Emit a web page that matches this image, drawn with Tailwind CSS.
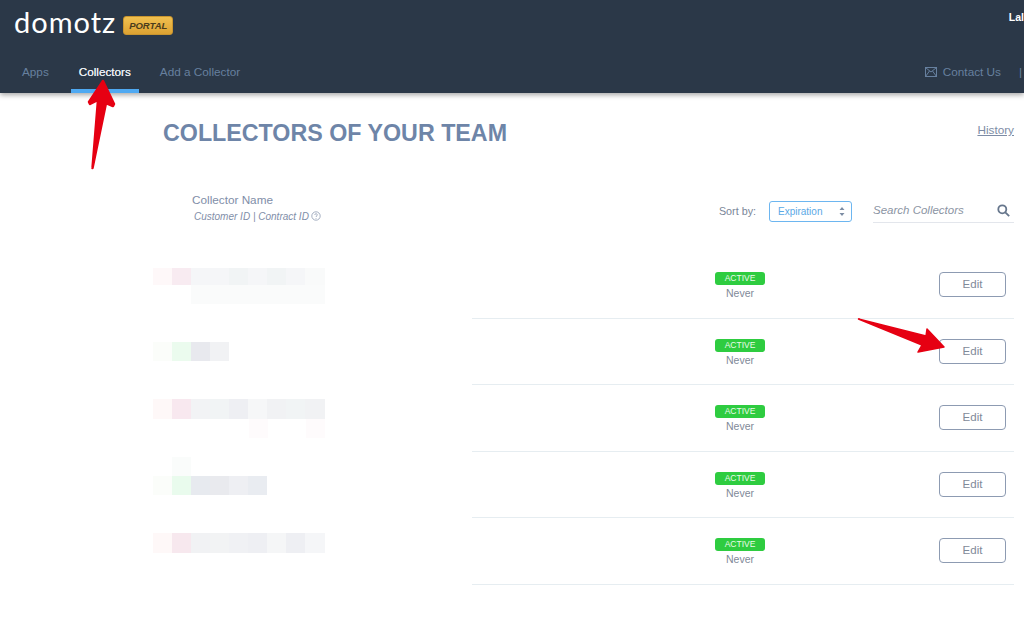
<!DOCTYPE html>
<html lang="en">
<head>
    <meta charset="UTF-8">
    <meta name="viewport" content="width=device-width, initial-scale=1.0">
    <title>Domotz Portal - Collectors</title>
    <script src="https://cdn.jsdelivr.net/npm/@tailwindcss/browser@4"></script>
</head>
<body class="relative h-[629px] w-[1024px] overflow-hidden bg-white font-['Liberation_Sans',Arial,sans-serif]">

    <!-- Top bar -->
    <header class="relative z-10 h-[93px] bg-[#2b3848] shadow-[0_2px_5px_rgba(0,0,0,0.35)]">
        <div class="flex h-[51px] items-start">
            <span class="ml-[14px] mt-[2px] font-['Lato',sans-serif] text-[29px] leading-[40px] font-normal tracking-[1px] text-white">domotz</span>
            <span class="ml-[7px] mt-[16px] flex h-[19px] w-[50px] items-center justify-center rounded-[3px] border border-[#c9952f] bg-gradient-to-b from-[#f0c04f] to-[#dda232] text-[9.5px] leading-none font-bold text-[#4a3c1c] italic">PORTAL</span>
            <span class="ml-auto mt-[11px] text-[10.5px] leading-[12px] font-bold text-white">Lal</span>
        </div>
        <nav class="flex h-[42px] text-[11.75px] leading-[14px]">
            <a class="ml-[22px] pt-[14px] text-[#67809f]">Apps</a>
            <a class="ml-[22px] w-[68px] border-b-4 border-[#4fa9f2] pt-[14px] text-center text-[#e8edf2] [text-shadow:0_0_0.6px_#e8edf2]">Collectors</a>
            <a class="ml-[21px] pt-[14px] text-[#67809f]">Add a Collector</a>
            <div class="ml-auto flex items-start pt-[14px] text-[#67809f]">
                <svg class="mt-[2px] mr-[6px] h-[10px] w-[12px]" viewBox="0 0 12 10" fill="none" stroke="#67809f" stroke-width="1"><rect x="0.5" y="0.5" width="11" height="9"/><path d="M0.5 0.5 6 5l5.5-4.5M0.5 9.5 4.5 4M11.5 9.5 7.5 4"/></svg>
                <span>Contact Us</span>
                <span class="ml-[18px] mr-[2px]">|</span>
            </div>
        </nav>
    </header>

    <main>
        <!-- Title -->
        <div class="flex items-start pt-[26px] pr-[10px] pl-[163px]">
            <h1 class="text-[23.25px] leading-[28px] font-bold text-[#6e85a8]">COLLECTORS OF YOUR TEAM</h1>
            <a class="ml-auto pt-[4px] text-[11.75px] leading-[14px] text-[#7d8ca5] underline">History</a>
        </div>

        <!-- Column header and filters -->
        <div class="mt-[45px] flex h-[40px] items-start pr-[10px] pl-[192px]">
            <div class="pt-[1px]">
                <p class="text-[11.75px] leading-[14px] text-[#7f8ea8]">Collector Name</p>
                <p class="mt-[3px] ml-[2px] flex items-center text-[10px] leading-[14px] text-[#7f8ea8] italic">
                    Customer ID | Contract ID
                    <svg class="mb-[2px] ml-[2px] h-[10px] w-[10px]" viewBox="0 0 10 10" fill="none" stroke="#7f8ea8" stroke-width="0.7"><circle cx="5" cy="5" r="4.2"/><path d="M3.7 3.9C3.7 2.3 6.4 2.4 6.3 3.9 6.3 4.9 5 4.9 5 6"/><path d="M5 7v.8"/></svg>
                </p>
            </div>
            <span class="ml-auto pt-[12px] text-[10.75px] leading-[14px] text-[#7a8698]">Sort by:</span>
            <div class="mt-[9px] ml-[13px] flex h-[21px] w-[83px] items-center justify-between rounded-[3px] border border-[#6db6f0] pr-[6px] pl-[8px] text-[10px] text-[#5aa9e6]">
                Expiration
                <svg class="h-[9px] w-[6px]" viewBox="0 0 6 9" fill="#7c8ca3"><path d="M3 0 5.5 3H.5zM3 9 .5 6h5z"/></svg>
            </div>
            <div class="mt-[6px] ml-[21px] flex h-[25px] w-[141px] items-start justify-between border-b border-[#e3e6ec] pt-[5px] pr-[4px] text-[11.5px] leading-[14px] text-[#8b94a3] italic">
                Search Collectors
                <svg class="mt-[1px] h-[13px] w-[13px]" viewBox="0 0 13 13" fill="none" stroke="#66768c" stroke-width="1.8"><circle cx="5.3" cy="5.3" r="4"/><path d="m8.3 8.3 3.9 3.9"/></svg>
            </div>
        </div>

        <!-- Collector rows -->
        <div class="mt-[20px] pr-[10px] pl-[153px]">
            <div class="flex h-[67px]">
                <div class="w-[319px] pt-[16px]">
                    <div class="flex h-[17px]">
                        <div class="w-[19px] bg-[#fef8f9]"></div><div class="w-[19px] bg-[#f8ebf1]"></div><div class="w-[19px] bg-[#f5f6f8]"></div><div class="w-[19px] bg-[#f5f6f8]"></div><div class="w-[19px] bg-[#f1f4f5]"></div><div class="w-[19px] bg-[#f5f6f8]"></div><div class="w-[19px] bg-[#f1f4f5]"></div><div class="w-[19px] bg-[#f5f6f8]"></div><div class="w-[20px] bg-[#f9fafa]"></div>
                    </div>
                    <div class="ml-[38px] h-[19px] w-[134px] bg-[#fafbfb]"></div>
                </div>
                <div class="flex flex-1 items-start border-b border-[#e6edf1] pt-[20px]">
                    <div class="ml-[243px] flex w-[50px] flex-col items-center">
                        <span class="h-[13px] w-[50px] rounded-[3px] bg-[#2ecc40] text-center text-[8.5px] leading-[13px] text-[#e9fbe9]">ACTIVE</span>
                        <span class="mt-[1px] text-[10.5px] leading-[14px] text-[#7f8a99]">Never</span>
                    </div>
                    <button class="mr-[8px] ml-auto h-[25px] w-[67px] rounded-[4px] border border-[#8d9bb2] text-[11.5px] text-[#7f8a99]">Edit</button>
                </div>
            </div>

            <div class="flex h-[66px]">
                <div class="w-[319px] pt-[23px]">
                    <div class="flex h-[19px]">
                        <div class="w-[19px] bg-[#fbfdfa]"></div><div class="w-[19px] bg-[#ebfbee]"></div><div class="w-[19px] bg-[#e8e9ee]"></div><div class="w-[19px] bg-[#f1f2f4]"></div>
                    </div>
                </div>
                <div class="flex flex-1 items-start border-b border-[#e6edf1] pt-[20px]">
                    <div class="ml-[243px] flex w-[50px] flex-col items-center">
                        <span class="h-[13px] w-[50px] rounded-[3px] bg-[#2ecc40] text-center text-[8.5px] leading-[13px] text-[#e9fbe9]">ACTIVE</span>
                        <span class="mt-[1px] text-[10.5px] leading-[14px] text-[#7f8a99]">Never</span>
                    </div>
                    <button class="mr-[8px] ml-auto h-[25px] w-[67px] rounded-[4px] border border-[#8d9bb2] text-[11.5px] text-[#7f8a99]">Edit</button>
                </div>
            </div>

            <div class="flex h-[67px]">
                <div class="w-[319px] pt-[14px]">
                    <div class="flex h-[20px]">
                        <div class="w-[19px] bg-[#fef8f8]"></div><div class="w-[19px] bg-[#f8e8ef]"></div><div class="w-[19px] bg-[#f2f3f5]"></div><div class="w-[19px] bg-[#f1f4f5]"></div><div class="w-[19px] bg-[#eeeff3]"></div><div class="w-[19px] bg-[#f6f7f8]"></div><div class="w-[19px] bg-[#f1f2f4]"></div><div class="w-[19px] bg-[#f1f4f5]"></div><div class="w-[20px] bg-[#f1f2f4]"></div>
                    </div>
                    <div class="flex h-[19px]">
                        <div class="ml-[96px] w-[19px] bg-[#fefbfc]"></div><div class="ml-[38px] w-[19px] bg-[#fefbfc]"></div>
                    </div>
                </div>
                <div class="flex flex-1 items-start border-b border-[#e6edf1] pt-[20px]">
                    <div class="ml-[243px] flex w-[50px] flex-col items-center">
                        <span class="h-[13px] w-[50px] rounded-[3px] bg-[#2ecc40] text-center text-[8.5px] leading-[13px] text-[#e9fbe9]">ACTIVE</span>
                        <span class="mt-[1px] text-[10.5px] leading-[14px] text-[#7f8a99]">Never</span>
                    </div>
                    <button class="mr-[8px] ml-auto h-[25px] w-[67px] rounded-[4px] border border-[#8d9bb2] text-[11.5px] text-[#7f8a99]">Edit</button>
                </div>
            </div>

            <div class="flex h-[66px]">
                <div class="w-[319px] pt-[5px]">
                    <div class="ml-[19px] h-[19px] w-[19px] bg-[#fafcfb]"></div>
                    <div class="flex h-[19px]">
                        <div class="w-[19px] bg-[#fbfdfa]"></div><div class="w-[19px] bg-[#e9fbed]"></div><div class="w-[19px] bg-[#e7eaef]"></div><div class="w-[19px] bg-[#e9eaee]"></div><div class="w-[19px] bg-[#eeeff3]"></div><div class="w-[19px] bg-[#e9ecf1]"></div>
                    </div>
                </div>
                <div class="flex flex-1 items-start border-b border-[#e6edf1] pt-[20px]">
                    <div class="ml-[243px] flex w-[50px] flex-col items-center">
                        <span class="h-[13px] w-[50px] rounded-[3px] bg-[#2ecc40] text-center text-[8.5px] leading-[13px] text-[#e9fbe9]">ACTIVE</span>
                        <span class="mt-[1px] text-[10.5px] leading-[14px] text-[#7f8a99]">Never</span>
                    </div>
                    <button class="mr-[8px] ml-auto h-[25px] w-[67px] rounded-[4px] border border-[#8d9bb2] text-[11.5px] text-[#7f8a99]">Edit</button>
                </div>
            </div>

            <div class="flex h-[67px]">
                <div class="w-[319px] pt-[15px]">
                    <div class="flex h-[20px]">
                        <div class="w-[19px] bg-[#fef8f8]"></div><div class="w-[19px] bg-[#f7e8ee]"></div><div class="w-[19px] bg-[#f1f2f4]"></div><div class="w-[19px] bg-[#f2f3f4]"></div><div class="w-[19px] bg-[#f0f1f4]"></div><div class="w-[19px] bg-[#eeeff3]"></div><div class="w-[19px] bg-[#f5f6f7]"></div><div class="w-[19px] bg-[#eeeff3]"></div><div class="w-[20px] bg-[#f5f6f8]"></div>
                    </div>
                </div>
                <div class="flex flex-1 items-start border-b border-[#e6edf1] pt-[20px]">
                    <div class="ml-[243px] flex w-[50px] flex-col items-center">
                        <span class="h-[13px] w-[50px] rounded-[3px] bg-[#2ecc40] text-center text-[8.5px] leading-[13px] text-[#e9fbe9]">ACTIVE</span>
                        <span class="mt-[1px] text-[10.5px] leading-[14px] text-[#7f8a99]">Never</span>
                    </div>
                    <button class="mr-[8px] ml-auto h-[25px] w-[67px] rounded-[4px] border border-[#8d9bb2] text-[11.5px] text-[#7f8a99]">Edit</button>
                </div>
            </div>
        </div>
    </main>

    <!-- Red annotation arrows drawn over the screenshot -->
    <svg class="absolute top-0 left-0 z-20 h-[629px] w-[1024px]" viewBox="0 0 1024 629" fill="#e60012" stroke="#e60012" stroke-width="3" stroke-linejoin="round">
        <path d="M103 81 89 102 90 104 98 100 92.5 168 106 103 113 106 114 104Z" stroke-width="2.5"/>
        <path d="M858.5 319 926 336 927 329 944 347 918 352 922 345Z" stroke-width="1.5"/>
    </svg>
</body>
</html>
